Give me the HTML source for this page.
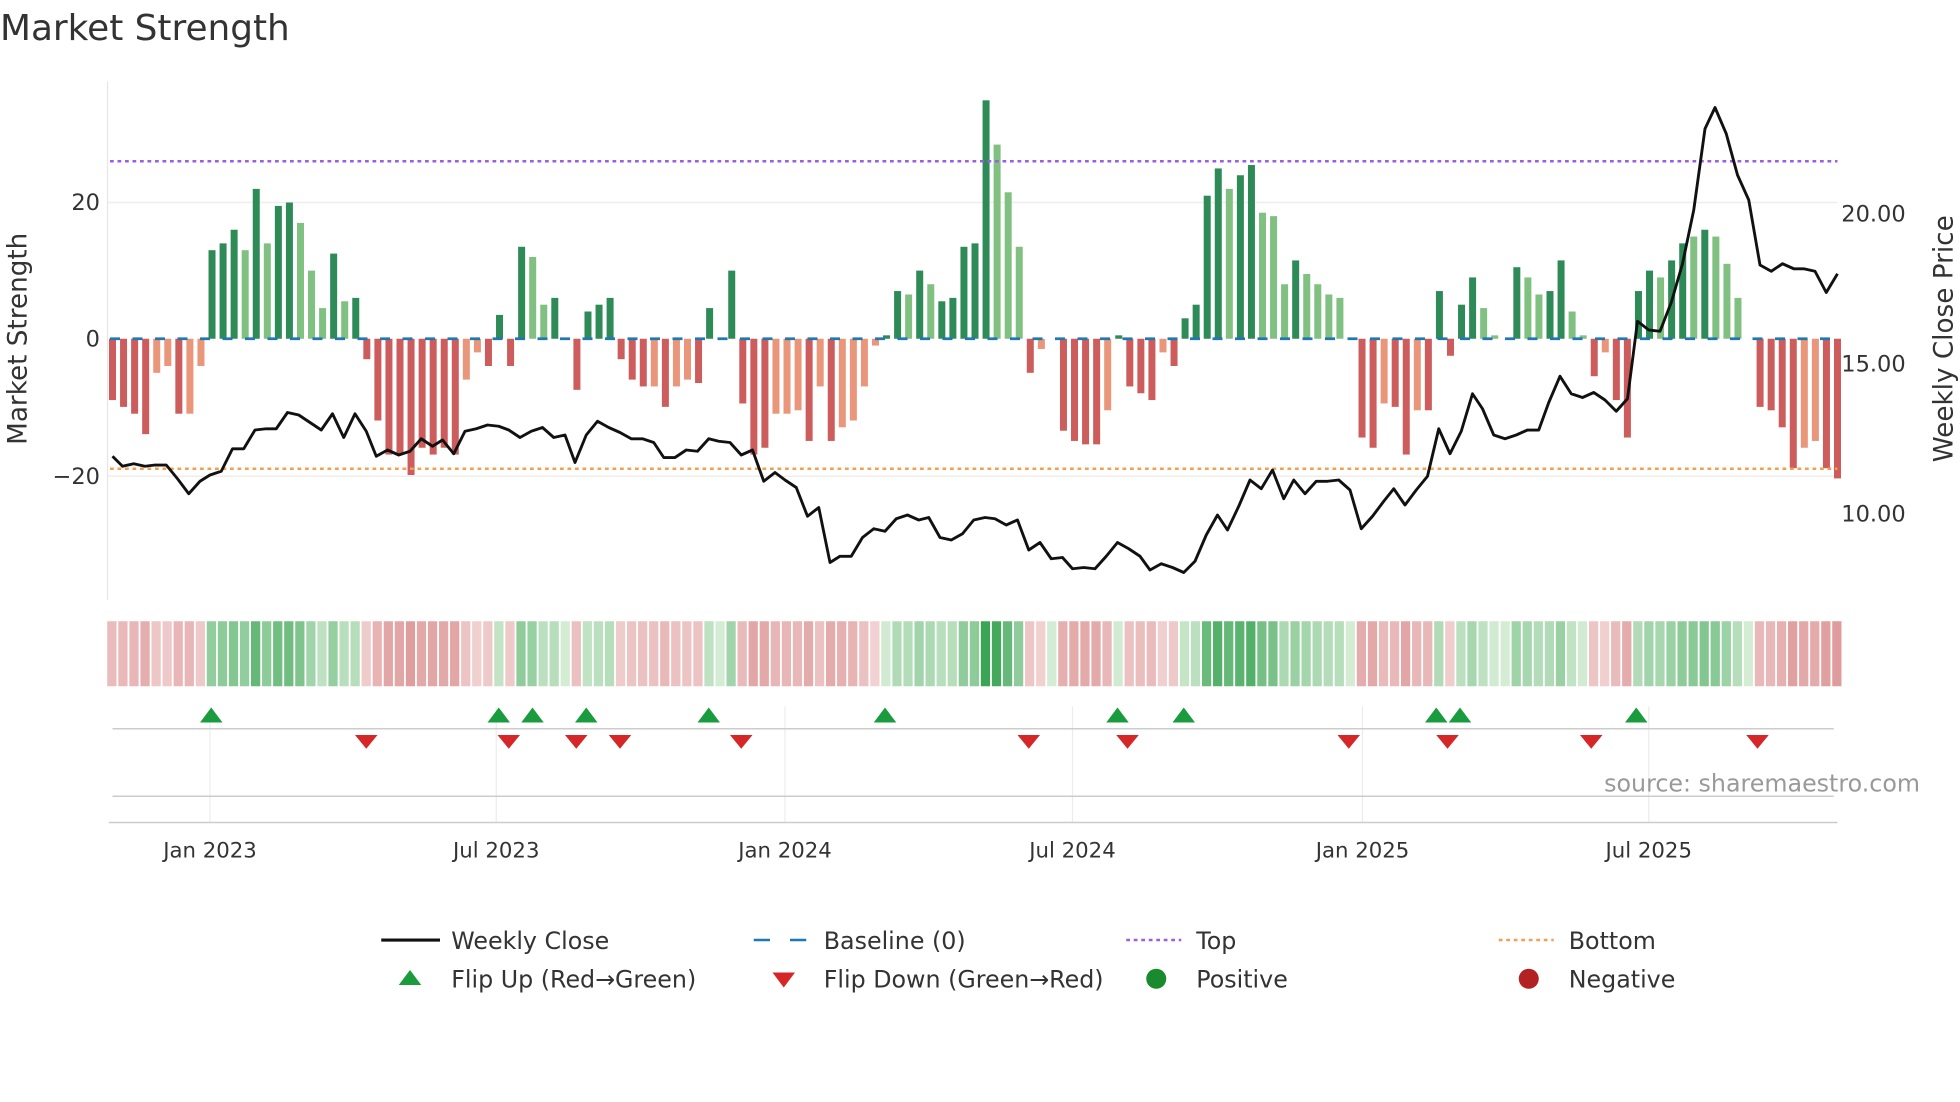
<!DOCTYPE html>
<html><head><meta charset="utf-8">
<style>
html,body{margin:0;padding:0;background:#fff;}
svg{display:block;font-family:"DejaVu Sans","Liberation Sans",sans-serif;}
</style></head>
<body>
<svg id="s" width="1960" height="1102" viewBox="0 0 1568 881.6" xmlns="http://www.w3.org/2000/svg">
<rect width="1568" height="882" fill="#fff"/>
<text x="0" y="32" font-size="28.7" fill="#333">Market Strength</text>
<line x1="86" y1="65" x2="86" y2="480" stroke="#e6e6e6" stroke-width="1"/>
<line x1="86" y1="162" x2="1470" y2="162" stroke="#eeeeee" stroke-width="1.2"/>
<line x1="86" y1="381" x2="1470" y2="381" stroke="#eeeeee" stroke-width="1.2"/>
<g font-size="18" fill="#333" text-anchor="end">
<text x="80" y="168">20</text><text x="80" y="277">0</text><text x="80" y="387">−20</text>
</g>
<g font-size="18" fill="#333">
<text x="1473" y="177">20.00</text><text x="1473" y="297">15.00</text><text x="1473" y="417">10.00</text>
</g>
<text transform="translate(21,271) rotate(-90)" font-size="21" fill="#333" text-anchor="middle">Market Strength</text>
<text transform="translate(1562,271) rotate(-90)" font-size="21" fill="#333" text-anchor="middle">Weekly Close Price</text>
<g id="bars"></g>
<line x1="88" y1="271" x2="1470" y2="271" stroke="#1f77b4" stroke-width="2.2" stroke-dasharray="8 10"/>
<line x1="88" y1="129" x2="1470" y2="129" stroke="#9b5de5" stroke-width="2" stroke-dasharray="3 3"/>
<line x1="88" y1="375" x2="1470" y2="375" stroke="#f0a050" stroke-width="2" stroke-dasharray="3 3"/>
<polyline id="price" fill="none" stroke="#111" stroke-width="2.3" stroke-linejoin="round"/>
<g id="heat"></g>
<g stroke="#ececec" stroke-width="1">
<line x1="168" y1="565" x2="168" y2="658"/><line x1="397" y1="565" x2="397" y2="658"/><line x1="628" y1="565" x2="628" y2="658"/><line x1="858" y1="565" x2="858" y2="658"/><line x1="1090" y1="565" x2="1090" y2="658"/><line x1="1319" y1="565" x2="1319" y2="658"/>
</g>
<line x1="90" y1="583" x2="1467" y2="583" stroke="#cccccc" stroke-width="1.2"/>
<line x1="90" y1="637" x2="1467" y2="637" stroke="#cccccc" stroke-width="1.2"/>
<line x1="87" y1="658" x2="1470" y2="658" stroke="#cccccc" stroke-width="1.2"/>
<g id="sig"></g>
<text x="1536" y="633" font-size="19" fill="#999" text-anchor="end">source: sharemaestro.com</text>
<g font-size="17" fill="#333" text-anchor="middle">
<text x="168" y="686">Jan 2023</text><text x="397" y="686">Jul 2023</text><text x="628" y="686">Jan 2024</text><text x="858" y="686">Jul 2024</text><text x="1090" y="686">Jan 2025</text><text x="1319" y="686">Jul 2025</text>
</g>
<g font-size="19" fill="#333">
<line x1="305" y1="752" x2="352" y2="752" stroke="#111" stroke-width="2.5"/>
<text x="361" y="759">Weekly Close</text>
<line x1="603" y1="752" x2="647" y2="752" stroke="#1f77b4" stroke-width="2" stroke-dasharray="13 16"/>
<text x="659" y="759">Baseline (0)</text>
<line x1="901" y1="752" x2="945" y2="752" stroke="#9b5de5" stroke-width="2" stroke-dasharray="3 3"/>
<text x="957" y="759">Top</text>
<line x1="1199" y1="752" x2="1243" y2="752" stroke="#f0a050" stroke-width="2" stroke-dasharray="3 3"/>
<text x="1255" y="759">Bottom</text>
<polygon points="319,788 337,788 328,776" fill="#1a9c3e"/>
<text x="361" y="790">Flip Up (Red→Green)</text>
<polygon points="618,778 636,778 627,790" fill="#d62728"/>
<text x="659" y="790">Flip Down (Green→Red)</text>
<circle cx="925" cy="783" r="8" fill="#1a8a2e"/>
<text x="957" y="790">Positive</text>
<circle cx="1223" cy="783" r="8" fill="#b22222"/>
<text x="1255" y="790">Negative</text>
</g>
</svg>
<script>
var NS="http://www.w3.org/2000/svg";
var d="-9 r,-10 r,-11 r,-14 r,-5 l,-4 l,-11 r,-11 l,-4 l,13 g,14 g,16 g,13 h,22 g,14 h,19.5 g,20 g,17 h,10 h,4.5 h,12.5 g,5.5 h,6 g,-3 r,-12 r,-17 r,-17 r,-20 r,-16 r,-17 r,-16 r,-17 r,-6 l,-2 l,-4 r,3.5 g,-4 r,13.5 g,12 h,5 h,6 g,0 g,-7.5 r,4 g,5 g,6 g,-3 r,-6 r,-7 r,-7 l,-10 r,-7 l,-6 l,-6.5 r,4.5 g,0 g,10 g,-9.5 r,-17 r,-16 r,-11 l,-11 l,-10.5 l,-15 r,-7 l,-15 r,-13 l,-12 l,-7 l,-1 l,0.5 g,7 g,6.5 h,10 g,8 h,5.5 g,6 g,13.5 g,14 g,35 g,28.5 h,21.5 h,13.5 h,-5 r,-1.5 l,0 g,-13.5 r,-15 r,-15.5 r,-15.5 r,-10.5 l,0.5 g,-7 r,-8 r,-9 r,-2 l,-4 r,3 g,5 g,21 g,25 g,22 h,24 g,25.5 g,18.5 h,18 h,8 h,11.5 g,9.5 h,8 h,6.5 h,6 h,0 g,-14.5 r,-16 r,-9.5 l,-10 r,-17 r,-10.5 l,-10.5 r,7 g,-2.5 r,5 g,9 g,4.5 h,0.5 h,0 g,10.5 g,9 h,6.5 h,7 g,11.5 g,4 h,0.5 h,-5.5 r,-2 l,-9 r,-14.5 r,7 g,10 g,9 h,11.5 g,14 g,15 h,16 g,15 h,11 h,6 h,0 g,-10 r,-10.5 r,-13 r,-19 r,-16 l,-15 l,-19 r,-20.5 r".split(",");
var col={g:"#2e8b57",h:"#80c080",r:"#cd5c5c",l:"#e9967a"};
var bars=document.getElementById("bars"),heat=document.getElementById("heat");
var n=d.length,step=(1470-90)/(n-1);
function mix(a,b,t){return "rgb("+[0,1,2].map(function(i){return Math.round(a[i]+(b[i]-a[i])*t)}).join(",")+")";}
d.forEach(function(s,i){
 var p=s.split(" "),v=parseFloat(p[0]),x=90+i*step;
 var y0=271,y1=271-v*5.45;
 var r=document.createElementNS(NS,"rect");
 r.setAttribute("x",x-2.8);r.setAttribute("width",5.6);
 r.setAttribute("y",Math.min(y0,y1));r.setAttribute("height",Math.abs(y1-y0));
 r.setAttribute("fill",col[p[1]]);bars.appendChild(r);
 var h=document.createElementNS(NS,"rect");
 h.setAttribute("x",x-4.2);h.setAttribute("width",7.4);h.setAttribute("y",497);h.setAttribute("height",52);
 var t=Math.min(Math.abs(v)/30,1);
 var c=v>=0?mix([212,236,212],[60,165,85],t):mix([242,212,212],[214,130,130],t);
 h.setAttribute("fill",c);heat.appendChild(h);
});
var pts="90,365 98,373 107,371 116,373 124,372 133,372 142,383 151,395 160,385 168,380 177,377 186,359 195,359 204,344 213,343 221,343 230,330 239,332 248,338 257,344 266,331 275,350 284,331 293,345 301,365 310,360 319,364 328,361 337,351 346,357 354,352 363,363 372,345 381,343 390,340 399,341 407,344 416,350 425,345 434,342 443,350 452,348 460,370 469,348 478,337 487,342 496,346 505,351 514,351 523,354 531,366 540,366 549,360 558,361 567,351 575,353 584,354 593,364 602,360 611,385 620,378 628,384 637,390 646,413 655,406 664,450 672,445 681,445 690,430 699,423 708,425 717,415 726,412 735,416 743,414 752,430 761,432 770,427 779,416 788,414 796,415 805,420 814,416 823,440 832,434 841,447 850,446 858,455 867,454 876,455 885,445 894,434 903,439 912,445 920,456 929,451 938,454 947,458 956,449 965,428 974,412 982,424 991,405 1000,384 1009,391 1018,376 1027,399 1035,384 1044,395 1053,385 1062,385 1071,384 1080,392 1089,423 1098,413 1107,401 1115,391 1124,404 1133,392 1142,381 1151,343 1160,363 1169,345 1178,315 1186,327 1195,348 1204,351 1213,348 1222,344 1231,344 1239,322 1248,301 1257,315 1266,318 1275,314 1284,320 1293,329 1302,319 1310,257 1319,264 1328,265 1337,242 1346,211 1355,168 1364,103 1372,86 1381,107 1390,140 1399,160 1408,212 1417,217 1426,211 1435,215 1443,215 1452,217 1461,234 1470,219";
document.getElementById("price").setAttribute("points",pts);
var sig=document.getElementById("sig");
[169,399,426,469,567,708,894,947,1149,1168,1309].forEach(function(x){
 var p=document.createElementNS(NS,"polygon");
 p.setAttribute("points",(x-9)+",578 "+(x+9)+",578 "+x+",566");p.setAttribute("fill","#1a9c3e");sig.appendChild(p);});
[293,407,461,496,593,823,902,1079,1158,1273,1406].forEach(function(x){
 var p=document.createElementNS(NS,"polygon");
 p.setAttribute("points",(x-9)+",588 "+(x+9)+",588 "+x+",599");p.setAttribute("fill","#d62728");sig.appendChild(p);});
</script>
</body></html>
